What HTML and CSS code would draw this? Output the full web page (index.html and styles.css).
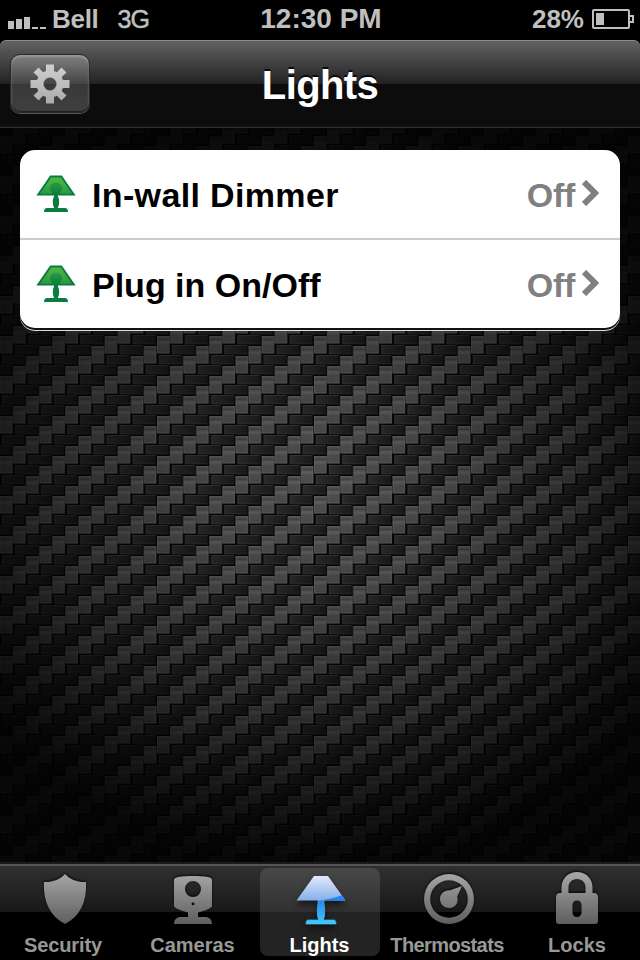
FILE: index.html
```html
<!DOCTYPE html>
<html lang="en">

<head>
  <meta charset="UTF-8">
  <meta name="viewport" content="width=device-width, initial-scale=1.0">
  <title>Lights</title>
  <link rel="stylesheet" href="styles.css">
</head>

<body>

  <!-- Status bar -->
  <div class="status-bar">
    <div class="status-left">
      <svg class="signal" width="38" height="12" viewBox="0 0 38 12" fill="#bfbfbf">
        <rect x="0" y="4" width="6" height="8"/>
        <rect x="8" y="2" width="6" height="10"/>
        <rect x="16" y="0" width="6" height="12"/>
        <rect x="24" y="10" width="6" height="2"/>
        <rect x="32" y="10" width="6" height="2"/>
      </svg>
      <span class="carrier">Bell</span>
      <span class="network">3G</span>
    </div>
    <div class="clock">12:30 PM</div>
    <div class="status-right">
      <span class="percent">28%</span>
      <svg width="42" height="20" viewBox="0 0 42 20">
        <rect x="1" y="1" width="36" height="18" rx="1" fill="none" stroke="#bfbfbf" stroke-width="2"/>
        <rect x="4" y="4" width="8" height="12" fill="#bfbfbf"/>
        <path d="M38 7h3v6h-3" fill="none" stroke="#bfbfbf" stroke-width="2"/>
      </svg>
    </div>
  </div>

  <!-- Header -->
  <header class="nav-bar">
    <button class="settings" aria-label="Settings">
      <svg width="40" height="40" viewBox="-20 -20 40 40">
        <defs>
          <linearGradient id="gearFill" x1="0" y1="-20" x2="0" y2="20" gradientUnits="userSpaceOnUse">
            <stop offset="0" stop-color="#d0d0d0"/>
            <stop offset="1" stop-color="#aaa"/>
          </linearGradient>
        </defs>
        <path d="M-4-19.5H4V-13L7-11.7 11.4-16.5 16.5-11.4 11.7-7 13-4H19.5V4H13L11.7 7 16.5 11.4 11.4 16.5 7 11.7 4 13V19.5H-4V13L-7 11.7-11.4 16.5-16.5 11.4-11.7 7-13 4H-19.5V-4H-13L-11.7-7-16.5-11.4-11.4-16.5-7-11.7-4-13zM0-6.5A6.5 6.5 0 1 0 0 6.5 6.5 6.5 0 1 0 0-6.5z" fill="url(#gearFill)" fill-rule="evenodd"/>
      </svg>
    </button>
    <h1>Lights</h1>
  </header>

  <!-- Main -->
  <main>

    <!-- Carbon fibre weave -->
    <svg class="weave" width="640" height="734" viewBox="0 128 640 734">
      <defs>
        <linearGradient id="strandV" x1="0" y1="0" x2="0" y2="1">
          <stop offset="0" stop-color="#5e5e5f"/>
          <stop offset=".2" stop-color="#434344"/>
          <stop offset=".35" stop-color="#606061"/>
          <stop offset=".55" stop-color="#4e4e4e"/>
          <stop offset="1" stop-color="#4c4c4c"/>
        </linearGradient>
        <linearGradient id="strandH" x1="0" y1="0" x2="1" y2="0">
          <stop offset="0" stop-color="#2c2c2c"/>
          <stop offset="1" stop-color="#191919"/>
        </linearGradient>
        <radialGradient id="vignette" gradientUnits="userSpaceOnUse" cx="0" cy="0" r="1" gradientTransform="translate(320 490) scale(410 375)">
          <stop offset="0" stop-color="#000" stop-opacity="0"/>
          <stop offset=".3" stop-color="#000" stop-opacity=".12"/>
          <stop offset=".65" stop-color="#000" stop-opacity=".46"/>
          <stop offset=".85" stop-color="#000" stop-opacity=".73"/>
          <stop offset="1" stop-color="#000" stop-opacity=".9"/>
        </radialGradient>
        <g id="vert">
          <rect width="12.4" height="17.4" fill="url(#strandV)"/>
          <path d="M.5 0V17H12V0" fill="none" stroke="#6c6c6c" stroke-opacity=".55"/>
        </g>
        <g id="horiz">
          <rect width="23" height="9.2" fill="url(#strandH)"/>
          <path d="M.5 9V.5H23" fill="none" stroke="#404040" stroke-opacity=".6"/>
          <path d="M0 8.8H23" stroke="#333" stroke-opacity=".6"/>
        </g>
        <pattern id="carbon" width="52.34" height="40" patternUnits="userSpaceOnUse">
          <rect width="53" height="40" fill="#050505"/>
          <use href="#horiz" x="1.8" y="35"/>
          <use href="#horiz" x="1.8" y="-5"/>
          <use href="#horiz" x="14.9" y="25"/>
          <use href="#horiz" x="28" y="15"/>
          <use href="#horiz" x="41.1" y="5"/>
          <use href="#horiz" x="-11.2" y="5"/>
          <use href="#vert" x="0" y="16"/>
          <use href="#vert" x="13.1" y="6"/>
          <use href="#vert" x="26.2" y="-4"/>
          <use href="#vert" x="26.2" y="36"/>
          <use href="#vert" x="39.2" y="26"/>
          <use href="#vert" x="39.2" y="-14"/>
        </pattern>
      </defs>
      <rect y="128" width="640" height="734" fill="url(#carbon)"/>
      <rect y="128" width="640" height="734" fill="url(#vignette)"/>
    </svg>

    <!-- Device list -->
    <ul class="devices">
      <li>
        <svg class="lamp" width="40" height="38" viewBox="0 0 40 38">
          <defs>
            <linearGradient id="shadeGreen" x1="0" y1="0" x2="0" y2="1">
              <stop offset="0" stop-color="#52b947"/>
              <stop offset="1" stop-color="#27983f"/>
            </linearGradient>
            <linearGradient id="bulbGreen" x1="0" y1="0" x2="0" y2="1">
              <stop offset="0" stop-color="#2c9a3e"/>
              <stop offset="1" stop-color="#087d3c"/>
            </linearGradient>
          </defs>
          <path d="M14.7 1.5H25.3L37.9 19.7H2.1z" fill="url(#shadeGreen)" stroke="#0a7a3e" stroke-width="1.8"/>
          <circle cx="20" cy="13.5" r="6" fill="url(#bulbGreen)"/>
          <path d="M18 19H22V21.5C23.8 25 23.4 30 21.8 33H29C31 33 32 34.5 32 37H8C8 34.5 9 33 11 33H18.2C16.6 30 16.2 25 18 21.5z" fill="#087d3e"/>
        </svg>
        <span class="name">In-wall Dimmer</span>
        <span class="state">Off</span>
        <svg class="chevron" width="17" height="26" viewBox="0 0 17 26">
          <path d="M2 2L13 13 2 24" fill="none" stroke="#808080" stroke-width="6"/>
        </svg>
      </li>
      <li>
        <svg class="lamp" width="40" height="38" viewBox="0 0 40 38">
          <path d="M14.7 1.5H25.3L37.9 19.7H2.1z" fill="url(#shadeGreen)" stroke="#0a7a3e" stroke-width="1.8"/>
          <circle cx="20" cy="13.5" r="6" fill="url(#bulbGreen)"/>
          <path d="M18 19H22V21.5C23.8 25 23.4 30 21.8 33H29C31 33 32 34.5 32 37H8C8 34.5 9 33 11 33H18.2C16.6 30 16.2 25 18 21.5z" fill="#087d3e"/>
        </svg>
        <span class="name plug">Plug in On/Off</span>
        <span class="state">Off</span>
        <svg class="chevron" width="17" height="26" viewBox="0 0 17 26">
          <path d="M2 2L13 13 2 24" fill="none" stroke="#808080" stroke-width="6"/>
        </svg>
      </li>
    </ul>

  </main>

  <!-- Tab bar -->
  <nav class="tab-bar">
    <a class="tab security" href="#security">
      <svg width="60" height="60" viewBox="0 0 60 60">
        <defs>
          <linearGradient id="tabGrey" x1="0" y1="4" x2="0" y2="56" gradientUnits="userSpaceOnUse">
            <stop offset="0" stop-color="#a8a8a8"/>
            <stop offset="1" stop-color="#5e5e5e"/>
          </linearGradient>
        </defs>
        <path d="M31 6C36 11.5 43 14.3 52 14C53 34 46 48 31 56C16 48 9 34 10 14C19 14.3 26 11.5 31 6z" fill="url(#tabGrey)"/>
      </svg>
      <span>Security</span>
    </a>
    <a class="tab cameras" href="#cameras">
      <svg width="60" height="60" viewBox="0 0 60 60">
        <path d="M12 12C12 10 14 9.5 16 9C25 7.6 37 7.6 46 9C48 9.5 50 10 50 12V38.5C47 41.5 42 43 36 44.5V49H43C47 49 50 51.5 50 56H12C12 51.5 15 49 19 49H26V44.5C20 43 15 41.5 12 38.5zM31 13A8 8 0 1 0 31 29 8 8 0 1 0 31 13zM31 34.3A1.5 1.5 0 1 0 31 37.3 1.5 1.5 0 1 0 31 34.3z" fill="url(#tabGrey)" fill-rule="evenodd"/>
      </svg>
      <span>Cameras</span>
    </a>
    <a class="tab active" href="#lights">
      <svg width="60" height="60" viewBox="0 0 60 60">
        <defs>
          <linearGradient id="shadeBlue" x1="0" y1="0" x2="0" y2="1">
            <stop offset="0" stop-color="#e2eafa"/>
            <stop offset="1" stop-color="#85b0ea"/>
          </linearGradient>
          <linearGradient id="standBlue" x1="0" y1="32" x2="0" y2="56" gradientUnits="userSpaceOnUse">
            <stop offset="0" stop-color="#2684f3"/>
            <stop offset="1" stop-color="#3fcaff"/>
          </linearGradient>
        </defs>
        <path d="M28 32H34V36C35 41 35 47 33.6 52H44C45.5 52 46 54 46 56H16C16 54 16.5 52 18 52H28.4C27 47 27 41 28 36z" fill="url(#standBlue)" stroke="#4bb9ef" stroke-width=".7"/>
        <path d="M24 8H38L55.5 32.5H6.5z" fill="url(#shadeBlue)"/>
        <path d="M28 32.5C37 31.8 45 30 51.7 27.3L55.5 32.5z" fill="#2386f8"/>
      </svg>
      <span>Lights</span>
    </a>
    <a class="tab thermostats" href="#thermostats">
      <svg width="60" height="60" viewBox="0 0 60 60">
        <path d="M31 6A25 25 0 1 0 31 56 25 25 0 1 0 31 6zM31 12.2A18.8 18.8 0 1 1 31 49.8 18.8 18.8 0 1 1 31 12.2z" fill="url(#tabGrey)" fill-rule="evenodd"/>
        <path d="M44 18L39.2 28.5C41 34.5 37.5 40 31 40C26 40 22 36 22 31C22 25.5 26.5 21.8 32 22.3z" fill="url(#tabGrey)"/>
      </svg>
      <span>Thermostats</span>
    </a>
    <a class="tab locks" href="#locks">
      <svg width="60" height="60" viewBox="0 0 60 60">
        <path d="M15.5 25V19.5C15.5 10.5 22 4 31 4S46.5 10.5 46.5 19.5V25H48C50.5 25 52 26.5 52 29V53C52 55 51 56 49 56H13C11 56 10 55 10 53V29C10 26.5 11.5 25 14 25zM22.5 25H39.5V19.5C39.5 14.5 36 11 31 11S22.5 14.5 22.5 19.5zM31 32.5C28.3 32.5 26.5 34.5 26.5 37V44.5C26.5 47 28.3 49 31 49S35.5 47 35.5 44.5V37C35.5 34.5 33.7 32.5 31 32.5z" fill="url(#tabGrey)" fill-rule="evenodd"/>
      </svg>
      <span>Locks</span>
    </a>
  </nav>

</body>

</html>
```
FILE: styles.css
```css
* {
  box-sizing: border-box;
}

body {
  display: flex;
  flex-direction: column;
  width: 640px;
  height: 960px;
  margin: 0;
  overflow: hidden;
  background: #000;
  font-family: "Liberation Sans", Arial, sans-serif;
  font-weight: bold;
}

svg {
  display: block;
  flex: none;
}

/* Status bar */
.status-bar {
  display: grid;
  grid-template-columns: 1fr auto 1fr;
  align-items: center;
  height: 40px;
  padding: 0 6px 2px 8px;
  color: #bfbfbf;
  font-size: 26px;
  line-height: 38px;
}

.status-left, .status-right {
  display: flex;
  align-items: center;
}

.status-left {
  height: 38px;
}

.status-right {
  justify-content: flex-end;
  height: 38px;
  gap: 8px;
}

.signal {
  margin-top: 8px;
}

.carrier {
  margin-left: 6px;
  letter-spacing: -0.3px;
}

.network {
  margin-left: 19px;
  font-size: 25px;
  font-weight: normal;
  letter-spacing: -0.9px;
  -webkit-text-stroke: 0.5px #bfbfbf;
}

.clock {
  font-size: 28px;
}

/* Header */
.nav-bar {
  display: grid;
  grid-template-columns: 80px 1fr 80px;
  align-items: center;
  height: 88px;
  padding: 0 10px;
  border-top: 1px solid #8a8a8a;
  border-bottom: 1px solid #303030;
  border-radius: 6px 6px 0 0;
  background: linear-gradient(#626262, #222 43px, #0c0c0c 43px, #0c0c0c 82px, #111);
}

.settings {
  display: flex;
  align-items: center;
  justify-content: center;
  width: 80px;
  height: 59px;
  padding: 0;
  margin: 0 0 1px;
  border: 1px solid #292929;
  border-radius: 10px;
  background: linear-gradient(#818181, #444 29px, #383838 29px, #404040);
  box-shadow: inset 0 2px 2px #999, inset 0 -1px 1px #222, 0 1px 0 #555;
}

h1 {
  margin: 1px 0 0;
  color: #fff;
  font-size: 40px;
  line-height: 46px;
  letter-spacing: -0.6px;
  text-align: center;
  text-shadow: 0 -2px 0 rgba(0, 0, 0, 0.8);
}

/* Main */
main {
  display: grid;
  flex: none;
  height: 734px;
}

.weave, .devices {
  grid-area: 1 / 1;
}

.devices {
  align-self: start;
  margin: 22px 20px;
  padding: 0;
  border-radius: 15px;
  background: #fff;
  list-style: none;
  box-shadow: 0 2px 0 #111, 0 3px 0 #ddd;
}

.devices li {
  display: flex;
  align-items: center;
  height: 88px;
  padding: 0 21px 0 16px;
  font-size: 34px;
}

.devices li + li {
  height: 90px;
  border-top: 2px solid #ccc;
}

.name {
  flex: 1;
  margin: 3px 0 0 16px;
  letter-spacing: 0.35px;
}

.plug {
  letter-spacing: 0;
}

.state {
  margin: 3px 7px 0 0;
  color: #808080;
  letter-spacing: -0.3px;
}

.chevron {
  margin-bottom: 2px;
}

/* Tab bar */
.tab-bar {
  display: flex;
  justify-content: space-between;
  height: 98px;
  padding: 4px 4px 5px;
  border-top: 2px solid #1a1a1a;
  background: linear-gradient(#555 0, #555 2px, #303030 2px, #181818 48px, #000 48px);
}

.tab {
  display: flex;
  flex-direction: column;
  align-items: center;
  width: 120px;
  height: 88px;
  border-radius: 8px;
  color: #989898;
  font-size: 20px;
  line-height: 22px;
  text-decoration: none;
}

.tab svg {
  height: 60px;
  filter: drop-shadow(0 -1px 1px rgba(0, 0, 0, 0.8));
}

.tab span {
  margin-top: 6px;
}

.active {
  background: linear-gradient(#484848, #303030 44px, #232323 44px);
  color: #fff;
}

.active svg {
  filter: drop-shadow(0 4px 3px rgba(0, 0, 0, 0.6));
}

.security span {
  margin-right: 2px;
  letter-spacing: -0.1px;
}

.cameras span {
  margin-left: 1px;
}

.active span {
  margin-right: 1px;
}

.thermostats span {
  margin-right: 2px;
  letter-spacing: -0.6px;
}

.locks span {
  margin-left: 2px;
}
```
